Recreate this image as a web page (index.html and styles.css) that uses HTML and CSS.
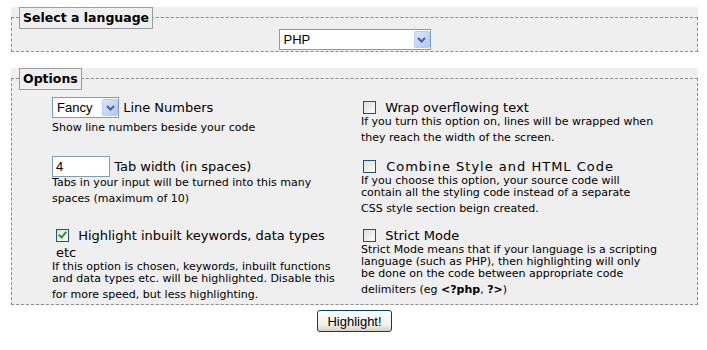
FILE: index.html
```html
<!DOCTYPE html>
<html lang="en">
<head>
    <meta charset="UTF-8">
    <title>GeSHi - Source Code Highlighter</title>
    <link rel="stylesheet" href="styles.css">
</head>
<body>
<form class="page" action="#">
    <div class="box">
        <div class="frame">
            <div class="legend">Select a language</div>
            <div class="lang-row">
                <span class="dropdown lang-drop">
                    <select class="lang-select"><option>PHP</option></select>
                    <span class="drop-btn"><svg width="9" height="6" viewBox="0 0 9 6"><polyline points="1,1 4.5,4.5 8,1" fill="none" stroke="#4d6185" stroke-width="2"/></svg></span>
                </span>
            </div>
        </div>
    </div>

    <div class="box box-options">
        <div class="frame">
            <div class="legend">Options</div>
            <div class="options">
                <div class="opt">
                    <div class="head">
                        <span class="dropdown fancy-drop">
                            <select class="fancy-select"><option>Fancy</option></select>
                            <span class="drop-btn"><svg width="9" height="6" viewBox="0 0 9 6"><polyline points="1,1 4.5,4.5 8,1" fill="none" stroke="#4d6185" stroke-width="2"/></svg></span>
                        </span>
                        Line Numbers
                    </div>
                    <p class="desc">Show line numbers beside your code</p>
                </div>
                <div class="opt opt-right">
                    <label class="head"><input type="checkbox" class="check"> Wrap overflowing text</label>
                    <p class="desc">If you turn this option on, lines will be wrapped when<br>they reach the width of the screen.</p>
                </div>

                <div class="opt">
                    <div class="head"><input type="text" class="tab-input" value="4"> Tab width (in spaces)</div>
                    <p class="desc">Tabs in your input will be turned into this many<br>spaces (maximum of 10)</p>
                </div>
                <div class="opt opt-right">
                    <label class="head head-wide"><input type="checkbox" class="check"> Combine Style and HTML Code</label>
                    <p class="desc">If you choose this option, your source code will<br>contain all the styling code instead of a separate<br>CSS style section beign created.</p>
                </div>

                <div class="opt">
                    <label class="head head-indent"><input type="checkbox" class="check" checked> Highlight inbuilt keywords, data types<br>etc</label>
                    <p class="desc">If this option is chosen, keywords, inbuilt functions<br>and data types etc. will be highlighted. Disable this<br>for more speed, but less highlighting.</p>
                </div>
                <div class="opt opt-right">
                    <label class="head"><input type="checkbox" class="check"> Strict Mode</label>
                    <p class="desc">Strict Mode means that if your language is a scripting<br>language (such as PHP), then highlighting will only<br>be done on the code between appropriate code<br>delimiters (eg <b>&lt;?php</b>, <b>?&gt;</b>)</p>
                </div>
            </div>
        </div>
    </div>

    <div class="submit-row">
        <button type="button" class="submit">Highlight!</button>
    </div>
</form>
</body>
</html>
```

FILE: styles.css
```css
body {
    margin: 0;
    background-color: #ffffff;
    color: #000000;
    font-family: "DejaVu Sans", Verdana, sans-serif;
}
.page {
    padding: 7px 9px 0 11px;
}
.box {
    background-color: #efefef;
    padding-top: 10px;
}
.box-options {
    margin-top: 16px;
}
.frame {
    border: 1px dashed #8c8c8c;
}
.legend {
    display: block;
    width: max-content;
    margin: -11px 0 0 7px;
    padding: 0 3px;
    border: 1px solid #9c9c9c;
    background-color: #efefef;
    font-size: 12.5px;
    font-weight: bold;
    line-height: 20px;
}
.lang-row {
    text-align: center;
    height: 22px;
}

/* selects drawn in the old XP style */
.dropdown {
    position: relative;
    display: inline-block;
    vertical-align: baseline;
}
.dropdown select {
    appearance: none;
    -webkit-appearance: none;
    margin: 0;
    border: 1px solid #7f9db9;
    border-radius: 0;
    background-color: #ffffff;
    color: #000000;
    font-family: "Liberation Sans", Arial, sans-serif;
    font-size: 13px;
    height: 21px;
    padding: 0 0 0 4px;
}
.lang-select {
    width: 152px;
}
.fancy-select {
    width: 67px;
    height: 20px;
    padding-left: 3px;
}
.drop-btn {
    position: absolute;
    top: 2px;
    right: 1px;
    bottom: 2px;
    width: 16px;
    display: flex;
    align-items: center;
    justify-content: center;
    border: 1px solid #b8cbf5;
    border-radius: 2px;
    background: linear-gradient(135deg, #dbe5fd, #b3c7f5);
    box-sizing: border-box;
    pointer-events: none;
}

.options {
    display: grid;
    grid-template-columns: 300px 1fr;
    column-gap: 9px;
    row-gap: 12px;
    align-items: baseline;
    padding: 7px 0 3px 40px;
}
.head {
    display: block;
    font-size: 13px;
    line-height: 17px;
}
.head-wide {
    letter-spacing: 1px;
}
.head-indent {
    padding-left: 4px;
}
.desc {
    margin: 0;
    font-size: 11px;
    line-height: 12px;
}
.desc::after {
    content: "";
    display: inline-block;
    height: 13px;
}
.opt-right .head {
    padding-left: 2px;
}

.check {
    appearance: none;
    -webkit-appearance: none;
    position: relative;
    width: 13px;
    height: 13px;
    margin: 0 5px 0 0;
    vertical-align: -2px;
    border: 1px solid #1c5180;
    background: linear-gradient(135deg, #dcdcd7, #ffffff);
}
.check:checked::after {
    content: "";
    position: absolute;
    left: 3px;
    top: 0px;
    width: 3px;
    height: 6px;
    border-right: 2px solid #21a121;
    border-bottom: 2px solid #21a121;
    transform: rotate(40deg);
}

.tab-input {
    width: 58px;
    height: 21px;
    box-sizing: border-box;
    margin: 0;
    padding: 0 3px;
    border: 1px solid #7f9db9;
    font-family: "Liberation Sans", Arial, sans-serif;
    font-size: 13px;
}

.submit-row {
    text-align: center;
    padding-top: 5px;
}
.submit {
    width: 75px;
    height: 22px;
    padding: 0;
    border: 1px solid #003c74;
    border-radius: 3px;
    background: linear-gradient(#ffffff, #f0efe8 70%, #d6d0c5);
    color: #000000;
    font-family: "Liberation Sans", Arial, sans-serif;
    font-size: 13px;
}
```
